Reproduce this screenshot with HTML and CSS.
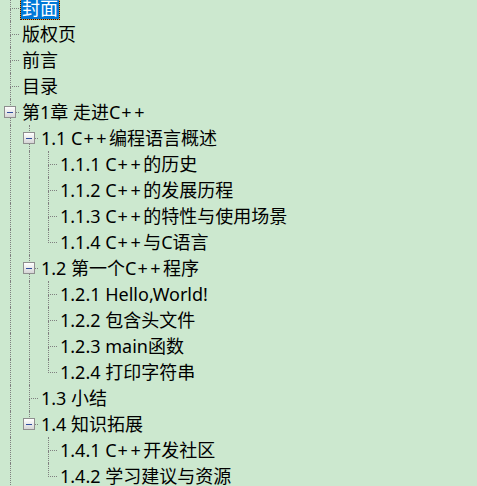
FILE: index.html
```html
<!DOCTYPE html>
<html lang="zh-CN">
<head>
<meta charset="utf-8">
<title>目录</title>
<link rel="stylesheet" href="styles.css">
</head>
<body>
<div class="tree">
  <div class="row">
    <span class="conn"><i class="tl"></i><i class="tr"></i><i class="bl"></i><i class="br"></i></span>
    <span class="label selected">封面</span>
  </div>
  <div class="row">
    <span class="conn"><i class="tl"></i><i class="tr"></i><i class="bl"></i><i class="br"></i></span>
    <span class="label">版权页</span>
  </div>
  <div class="row">
    <span class="conn"><i class="tl"></i><i class="tr"></i><i class="bl"></i><i class="br"></i></span>
    <span class="label">前言</span>
  </div>
  <div class="row">
    <span class="conn"><i class="tl"></i><i class="tr"></i><i class="bl"></i><i class="br"></i></span>
    <span class="label">目录</span>
  </div>
  <div class="row">
    <span class="conn"><i class="tl"></i><i class="tr"></i><i class="bl"></i><i class="br"></i><b class="exp"></b></span>
    <span class="label">第1章 走进C<span class="pp">++</span></span>
  </div>

  <div class="row">
    <span class="guide on"></span>
    <span class="conn"><i class="tl"></i><i class="tr"></i><i class="bl"></i><i class="br"></i><b class="exp"></b></span>
    <span class="label">1.1 C<span class="pp">++</span>编程语言概述</span>
  </div>
  <div class="row">
    <span class="guide on"></span><span class="guide on"></span>
    <span class="conn"><i class="tl"></i><i class="tr"></i><i class="bl"></i><i class="br"></i></span>
    <span class="label">1.1.1 C<span class="pp">++</span>的历史</span>
  </div>
  <div class="row">
    <span class="guide on"></span><span class="guide on"></span>
    <span class="conn"><i class="tl"></i><i class="tr"></i><i class="bl"></i><i class="br"></i></span>
    <span class="label">1.1.2 C<span class="pp">++</span>的发展历程</span>
  </div>
  <div class="row">
    <span class="guide on"></span><span class="guide on"></span>
    <span class="conn"><i class="tl"></i><i class="tr"></i><i class="bl"></i><i class="br"></i></span>
    <span class="label">1.1.3 C<span class="pp">++</span>的特性与使用场景</span>
  </div>
  <div class="row">
    <span class="guide on"></span><span class="guide on"></span>
    <span class="conn last"><i class="tl"></i><i class="tr"></i><i class="bl"></i><i class="br"></i></span>
    <span class="label">1.1.4 C<span class="pp">++</span>与C语言</span>
  </div>

  <div class="row">
    <span class="guide on"></span>
    <span class="conn"><i class="tl"></i><i class="tr"></i><i class="bl"></i><i class="br"></i><b class="exp"></b></span>
    <span class="label">1.2 第一个C<span class="pp">++</span>程序</span>
  </div>
  <div class="row">
    <span class="guide on"></span><span class="guide on"></span>
    <span class="conn"><i class="tl"></i><i class="tr"></i><i class="bl"></i><i class="br"></i></span>
    <span class="label">1.2.1 Hello,World!</span>
  </div>
  <div class="row">
    <span class="guide on"></span><span class="guide on"></span>
    <span class="conn"><i class="tl"></i><i class="tr"></i><i class="bl"></i><i class="br"></i></span>
    <span class="label">1.2.2 包含头文件</span>
  </div>
  <div class="row">
    <span class="guide on"></span><span class="guide on"></span>
    <span class="conn"><i class="tl"></i><i class="tr"></i><i class="bl"></i><i class="br"></i></span>
    <span class="label">1.2.3 main函数</span>
  </div>
  <div class="row">
    <span class="guide on"></span><span class="guide on"></span>
    <span class="conn last"><i class="tl"></i><i class="tr"></i><i class="bl"></i><i class="br"></i></span>
    <span class="label">1.2.4 打印字符串</span>
  </div>

  <div class="row">
    <span class="guide on"></span>
    <span class="conn"><i class="tl"></i><i class="tr"></i><i class="bl"></i><i class="br"></i></span>
    <span class="label">1.3 小结</span>
  </div>

  <div class="row">
    <span class="guide on"></span>
    <span class="conn last"><i class="tl"></i><i class="tr"></i><i class="bl"></i><i class="br"></i><b class="exp"></b></span>
    <span class="label">1.4 知识拓展</span>
  </div>
  <div class="row">
    <span class="guide on"></span><span class="guide"></span>
    <span class="conn"><i class="tl"></i><i class="tr"></i><i class="bl"></i><i class="br"></i></span>
    <span class="label">1.4.1 C<span class="pp">++</span>开发社区</span>
  </div>
  <div class="row">
    <span class="guide on"></span><span class="guide"></span>
    <span class="conn last"><i class="tl"></i><i class="tr"></i><i class="bl"></i><i class="br"></i></span>
    <span class="label">1.4.2 学习建议与资源</span>
  </div>
  <div class="row">
    <span class="guide on"></span>
  </div>
</div>
</body>
</html>
```

FILE: styles.css
```css
html, body {
  margin: 0;
  padding: 0;
  background: #cce8cf;
  overflow: hidden;
  height: 100%;
}

.tree {
  margin-top: -5px;
  display: flex;
  flex-direction: column;
  font-family: "Noto Sans", "Noto Sans CJK SC", sans-serif;
  font-size: 18px;
  color: #000;
}

.row {
  display: flex;
  height: 26px;
  white-space: nowrap;
}

.guide {
  flex: 0 0 19px;
  height: 26px;
  box-sizing: border-box;
}

.guide.on {
  border-left: 1px dotted #808080;
  margin-left: 10px;
  flex-basis: 9px;
}

.conn {
  position: relative;
  flex: 0 0 19px;
  height: 26px;
  display: grid;
  grid-template-columns: 10px 9px;
  grid-template-rows: 14px 12px;
}

.conn i {
  display: block;
  box-sizing: border-box;
}

.conn .tr {
  border-left: 1px dotted #808080;
  border-bottom: 1px dotted #808080;
}

.conn .br {
  border-left: 1px dotted #808080;
}

.conn.last .br {
  border-left: 0;
}

.exp {
  position: absolute;
  left: 4px;
  top: 7px;
  width: 12px;
  height: 12px;
  box-sizing: border-box;
  border: 1px solid #8f8f8f;
  background: linear-gradient(#ffffff, #d6d6d6);
  display: flex;
  align-items: center;
  justify-content: center;
}

.exp::before {
  content: "";
  width: 6px;
  height: 1px;
  background: #2e4e9e;
}

.label {
  margin-top: 3px;
  margin-left: 1px;
  height: 22px;
  line-height: 20px;
  padding: 0 2px;
  box-sizing: border-box;
}

.pp {
  letter-spacing: 2.5px;
  margin-left: 1px;
}

.label.selected {
  background: #0078d7;
  color: #fff;
  box-shadow: inset 0 0 0 1px #f0962a;
  outline: 1px dotted #1a1a1a;
  outline-offset: -1px;
}
```
